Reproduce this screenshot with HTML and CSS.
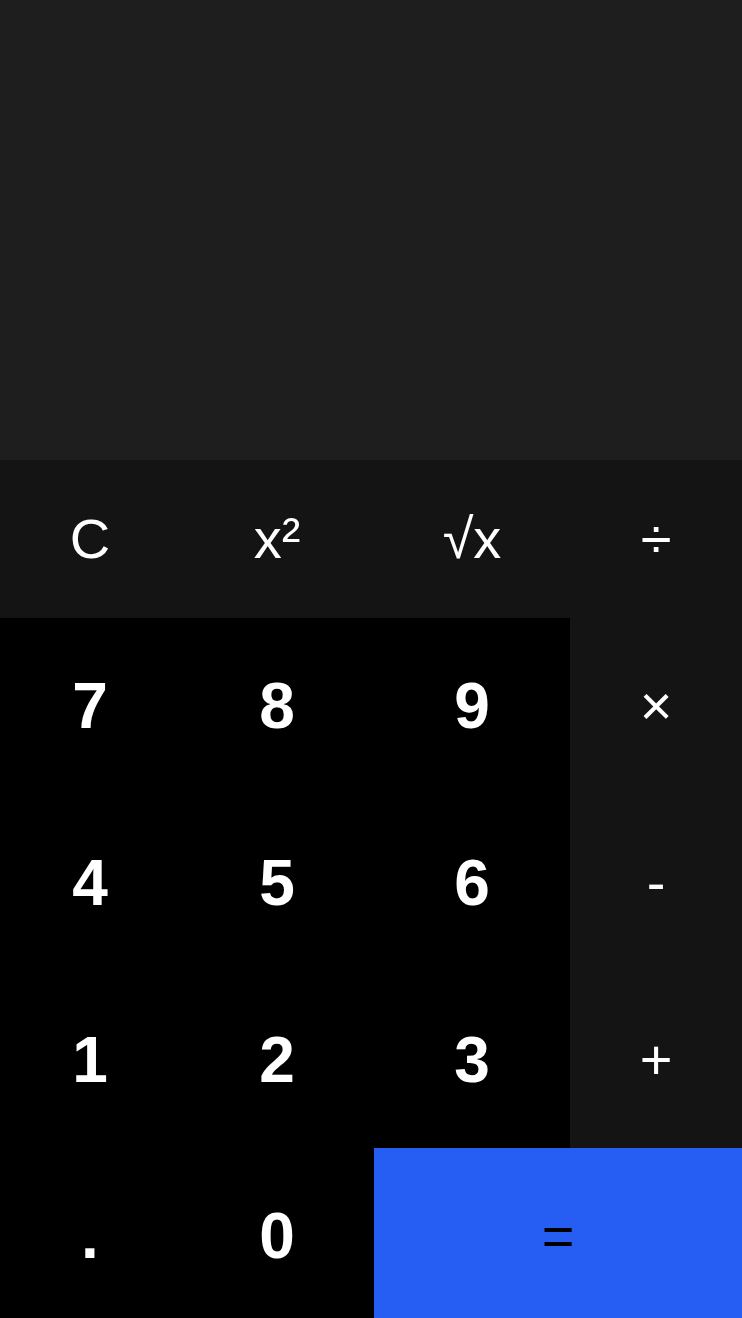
FILE: index.html
```html
<!DOCTYPE html>
<html lang="en">
<head>
<meta charset="utf-8">
<title>Calculator</title>
<link rel="stylesheet" href="styles.css">
</head>
<body>
<div class="calc">
  <div class="display"></div>
  <div class="keys">
    <button class="key fn">C</button>
    <button class="key fn">x²</button>
    <button class="key fn">√x</button>
    <button class="key fn">÷</button>

    <button class="key num">7</button>
    <button class="key num">8</button>
    <button class="key num">9</button>
    <button class="key op">×</button>

    <button class="key num">4</button>
    <button class="key num">5</button>
    <button class="key num">6</button>
    <button class="key op">-</button>

    <button class="key num">1</button>
    <button class="key num">2</button>
    <button class="key num">3</button>
    <button class="key op">+</button>

    <button class="key num">.</button>
    <button class="key num">0</button>
    <button class="key eq">=</button>
  </div>
</div>
</body>
</html>
```

FILE: styles.css
```css
* {
  box-sizing: border-box;
}

html, body {
  margin: 0;
  padding: 0;
  background: #000;
}

.calc {
  width: 742px;
  font-family: "Liberation Sans", Arial, sans-serif;
}

.display {
  height: 460px;
  background: #1e1e1e;
}

.keys {
  display: grid;
  grid-template-columns: 180px 194px 196px 172px;
  grid-template-rows: 158px repeat(4, 176.67px);
}

.key {
  border: 0;
  margin: 0;
  padding: 0;
  font-family: inherit;
  display: flex;
  align-items: center;
  justify-content: center;
  color: #fff;
  line-height: 1;
}

.fn {
  background: #141414;
  font-size: 56px;
  font-weight: 400;
}

.num {
  background: #000;
  font-size: 64px;
  font-weight: 700;
}

.op {
  background: #141414;
  font-size: 56px;
  font-weight: 400;
}

.eq {
  grid-column: 3 / span 2;
  background: #265ef4;
  color: #000;
  font-size: 56px;
  font-weight: 400;
}
```
